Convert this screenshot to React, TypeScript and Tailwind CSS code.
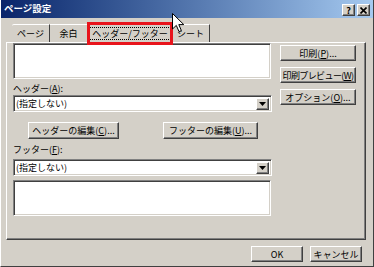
import React from "react";

const btn =
  "flex items-center justify-center border border-t-white border-l-white border-r-[#404040] border-b-[#404040] shadow-[inset_-1px_-1px_0_#808080] bg-[#d4d0c8] leading-none whitespace-nowrap";
const sunken =
  "border border-t-[#808080] border-l-[#808080] border-b-white border-r-white shadow-[inset_1px_1px_0_#404040,inset_-1px_-1px_0_#d4d0c8] bg-white";

function U({ c }: { c: string }) {
  return <span className="underline underline-offset-1">{c}</span>;
}

function Dropdown() {
  return (
    <div className={`${sunken} h-[17px] w-[259px] flex items-center justify-between pl-[2px] pr-[2px]`}>
      <span className="leading-none">(指定しない)</span>
      <div className={`${btn} w-[13px] h-[12px]`}>
        <svg width="7" height="4" viewBox="0 0 7 4">
          <path d="M0 0H7L3.5 4Z" fill="#000" />
        </svg>
      </div>
    </div>
  );
}

export default function App() {
  return (
    <div
      className="relative w-[374px] h-[267px] overflow-hidden bg-[#d4d0c8] text-black text-[9px] border-l border-l-white border-r border-r-[#404040] border-b border-b-[#404040] flex flex-col"
      style={{ fontFamily: '"Noto Sans CJK JP", "Noto Sans", sans-serif' }}
    >
      {/* title bar */}
      <div className="h-[18px] shrink-0 bg-linear-to-r from-[#0a246a] to-[#a6caf0] flex items-center justify-between pl-[3px] pr-[3px]">
        <span className="text-white font-bold text-[9.5px] leading-none">ページ設定</span>
        <div className="flex gap-[2px] mt-[2px]">
          <div className={`${btn} w-[13px] h-[12px] font-bold text-[9px]`}>?</div>
          <div className={`${btn} w-[13px] h-[12px]`}>
            <svg width="7" height="7" viewBox="0 0 7 7">
              <path d="M0.5 0.5L6.5 6.5M6.5 0.5L0.5 6.5" stroke="#000" strokeWidth="1.6" />
            </svg>
          </div>
        </div>
      </div>

      {/* tabs */}
      <div className="h-[24px] shrink-0 flex items-end pl-[11px]">
        <div className="h-[18px] w-[38px] flex items-center justify-center border-t border-t-white border-r border-r-[#404040] rounded-tl-[2px]">
          ページ
        </div>
        <div className="h-[18px] w-[38px] flex items-center justify-center border-t border-t-white border-r border-r-[#404040]">
          余白
        </div>
        <div className="h-[20px] w-[84px] flex items-center justify-center border-t border-l border-t-white border-l-white border-r border-r-[#404040] rounded-t-[2px] relative top-[1px] bg-[#d4d0c8] z-10">
          <span className="border border-dotted border-black px-[2px] leading-none py-[1px] whitespace-nowrap">ヘッダー/フッター</span>
        </div>
        <div className="h-[18px] w-[38px] flex items-center justify-center border-t border-t-white border-r border-r-[#404040]">
          シート
        </div>
      </div>

      {/* panel */}
      <div className="ml-[5px] w-[360px] h-[198px] shrink-0 border border-t-white border-l-white border-r-[#404040] border-b-[#404040] shadow-[inset_-1px_-1px_0_#808080] flex pl-[6px] pt-[0px]">
        <div className="w-[259px] flex flex-col">
          <div className={`${sunken} w-[258px] h-[36px]`} />
          <div className="mt-[5px] h-[10px] leading-none">
            ヘッダー(<U c="A" />):
          </div>
          <div className="mt-[1px]">
            <Dropdown />
          </div>
          <div className="mt-[10px] flex pl-[15px]">
            <div className={`${btn} w-[91px] h-[17px]`}>
              ヘッダーの編集(<U c="C" />)...
            </div>
            <div className={`${btn} w-[95px] h-[17px] ml-[44px]`}>
              フッターの編集(<U c="U" />)...
            </div>
          </div>
          <div className="mt-[6px] h-[10px] leading-none">
            フッター(<U c="F" />):
          </div>
          <div className="mt-[4px]">
            <Dropdown />
          </div>
          <div className={`${sunken} w-[258px] h-[36px] mt-[4px]`} />
        </div>
        <div className="ml-[8px] w-[76px] flex flex-col pt-[2px] gap-[6px]">
          <div className={`${btn} h-[16px]`}>
            印刷(<U c="P" />)...
          </div>
          <div className={`${btn} h-[16px] tracking-[-0.6px]`}>
            印刷プレビュー(<U c="W" />)
          </div>
          <div className={`${btn} h-[16px]`}>
            オプション(<U c="O" />)...
          </div>
        </div>
      </div>

      {/* bottom buttons */}
      <div className="flex justify-end gap-[7px] pr-[11px] pt-[6px]">
        <div className={`${btn} w-[52px] h-[16px]`}>OK</div>
        <div className={`${btn} w-[52px] h-[16px]`}>キャンセル</div>
      </div>

      {/* red annotation box */}
      <div className="absolute left-[86px] top-[22px] w-[86px] h-[23px] border-[3px] border-[#e8141c] z-20" />

      {/* mouse cursor */}
      <svg className="absolute left-[171px] top-[13px] z-30" width="13" height="20" viewBox="0 0 13 20">
        <path d="M0.5 0.5V16L4.3 12.4L7 18.6L9.4 17.6L6.8 11.6H11.8Z" fill="#fff" stroke="#000" strokeWidth="1" />
      </svg>
    </div>
  );
}
